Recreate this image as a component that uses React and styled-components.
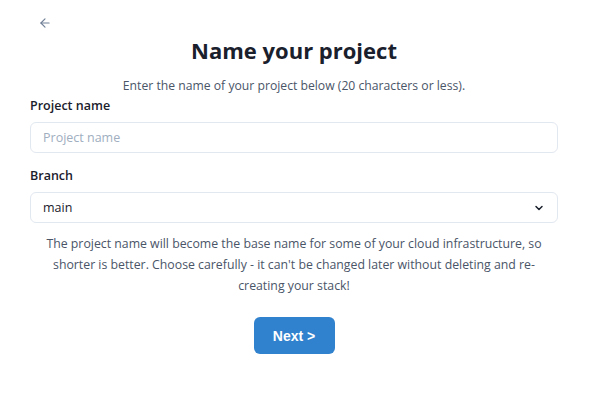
import React from "react";
import styled, { createGlobalStyle } from "styled-components";

const Global = createGlobalStyle`
  html, body { margin: 0; padding: 0; background: #fff; }
  body { font-family: "Open Sans", "Noto Sans", sans-serif; color: #1a202c; }
  * { box-sizing: border-box; }
`;

const Page = styled.div`
  display: flex;
  flex-direction: column;
  padding: 14px 42px 0 30px;
`;

const BackButton = styled.button`
  align-self: flex-start;
  display: flex;
  align-items: center;
  justify-content: center;
  width: 18px;
  height: 18px;
  margin-left: 6px;
  padding: 0;
  border: none;
  background: none;
  color: #718096;
  cursor: pointer;
`;

const Title = styled.h1`
  margin: 3px 0 0;
  text-align: center;
  font-size: 22px;
  line-height: 30px;
  font-weight: 700;
  color: #1a202c;
`;

const Subtitle = styled.p`
  margin: 12px 0 0;
  text-align: center;
  font-size: 12.2px;
  line-height: 18px;
  color: #4a5568;
`;

const Field = styled.div`
  display: flex;
  flex-direction: column;
  margin-top: ${(p) => p.$mt}px;
`;

const Label = styled.label`
  font-size: 12.5px;
  line-height: 18px;
  font-weight: 600;
  color: #1a202c;
  margin-bottom: 7px;
`;

const Input = styled.input`
  height: 31px;
  width: 100%;
  border: 1px solid #e2e8f0;
  border-radius: 6px;
  padding: 0 12px;
  font-family: inherit;
  font-size: 12.5px;
  color: #1a202c;
  outline: none;
  &::placeholder { color: #a0aec0; }
`;

const SelectWrap = styled.div`
  height: 31px;
  border: 1px solid #e2e8f0;
  border-radius: 6px;
  display: flex;
  align-items: center;
  padding: 0 12px;
  font-size: 12.5px;
  color: #1a202c;
`;

const Chevron = styled.span`
  margin-left: auto;
  display: flex;
  color: #1a202c;
`;

const Note = styled.p`
  margin: 10px 0 0;
  padding: 0 12px;
  text-align: center;
  font-size: 12.3px;
  line-height: 21px;
  color: #4a5568;
`;

const NextButton = styled.button`
  align-self: center;
  margin-top: 21px;
  width: 81px;
  height: 37px;
  border: none;
  border-radius: 6px;
  background: #3182ce;
  color: #fff;
  font-family: "Liberation Sans", Arial, sans-serif;
  font-weight: 700;
  font-size: 14px;
  cursor: pointer;
`;

export default function App() {
  return (
    <>
      <Global />
      <Page>
        <BackButton aria-label="Back">
          <svg width="14" height="14" viewBox="0 0 24 24" fill="none" stroke="currentColor" strokeWidth="2" strokeLinecap="round" strokeLinejoin="round">
            <path d="M19 12H5" />
            <path d="M12 19l-7-7 7-7" />
          </svg>
        </BackButton>
        <Title>Name your project</Title>
        <Subtitle>Enter the name of your project below (20 characters or less).</Subtitle>
        <Field $mt={2}>
          <Label>Project name</Label>
          <Input placeholder="Project name" />
        </Field>
        <Field $mt={14}>
          <Label>Branch</Label>
          <SelectWrap>
            main
            <Chevron>
              <svg width="12" height="12" viewBox="0 0 24 24" fill="none" stroke="currentColor" strokeWidth="3" strokeLinecap="round" strokeLinejoin="round">
                <path d="M6 9l6 6 6-6" />
              </svg>
            </Chevron>
          </SelectWrap>
        </Field>
        <Note>
          The project name will become the base name for some of your cloud infrastructure, so shorter is better. Choose carefully - it can't be changed later without deleting and re-creating your stack!
        </Note>
        <NextButton>Next &gt;</NextButton>
      </Page>
    </>
  );
}
